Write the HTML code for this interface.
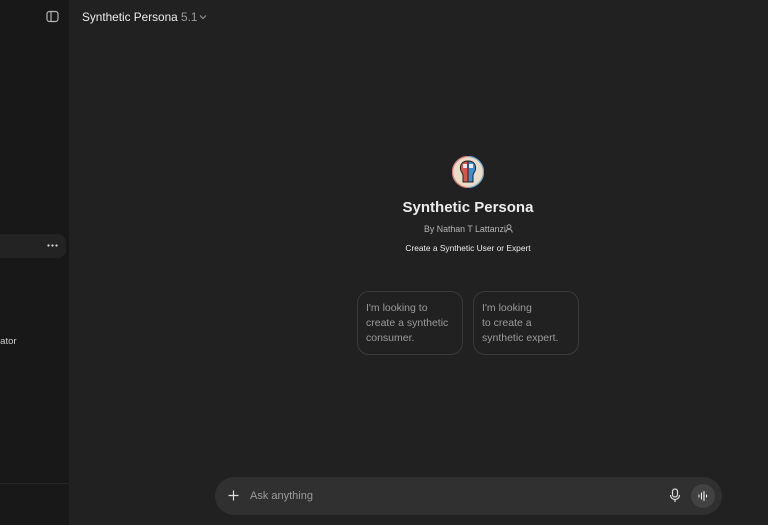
<!DOCTYPE html>
<html><head><meta charset="utf-8"><style>
*{margin:0;padding:0;box-sizing:border-box}
body{width:768px;height:525px;background:#212121;font-family:"Liberation Sans",sans-serif;position:relative;overflow:hidden;color:#ececec}
.side{position:absolute;left:0;top:0;width:69px;height:525px;background:#181818}
.t{position:absolute;white-space:nowrap}
.card{position:absolute;top:291px;width:106px;height:64px;border:1px solid #3a3a3a;border-radius:12px;font-size:10.5px;color:#9b9b9b;line-height:15px;padding:9px 8px}
</style></head><body>
<div class="side">
<svg style="position:absolute;left:46px;top:10px" width="13" height="13" viewBox="0 0 13 13"><rect x="1" y="1.5" width="11" height="10" rx="2.5" fill="none" stroke="#b4b4b4" stroke-width="1.2"/><line x1="5" y1="2" x2="5" y2="11" stroke="#b4b4b4" stroke-width="1.2"/></svg>
<div style="position:absolute;left:0;top:234px;width:66px;height:24px;background:#232323;border-radius:0 8px 8px 0"></div>
<svg style="position:absolute;left:47px;top:244px" width="11" height="3" viewBox="0 0 11 3"><circle cx="1.5" cy="1.5" r="1.1" fill="#ddd"/><circle cx="5.5" cy="1.5" r="1.1" fill="#ddd"/><circle cx="9.5" cy="1.5" r="1.1" fill="#ddd"/></svg>
<div class="t" style="left:-3px;top:336px;font-size:9.5px;color:#ccc">rator</div>
<div style="position:absolute;left:0;top:483px;width:69px;height:1px;background:#262626"></div>
</div>
<div class="t" style="left:82px;top:10px;font-size:11.8px;color:#ececec">Synthetic Persona <span style="color:#9b9b9b">5.1</span></div>
<svg style="position:absolute;left:199px;top:14px" width="8" height="6" viewBox="0 0 8 6"><path d="M1 1.5 L4 4.5 L7 1.5" fill="none" stroke="#9b9b9b" stroke-width="1.1"/></svg>
<svg style="position:absolute;left:452px;top:156px" width="32" height="32" viewBox="0 0 32 32">
<circle cx="16" cy="16" r="15.5" fill="#e9dcc8"/><path d="M16 0.5 A15.5 15.5 0 0 0 16 31.5" fill="none" stroke="#e07a70" stroke-width="1.3"/><path d="M16 0.5 A15.5 15.5 0 0 1 16 31.5" fill="none" stroke="#6aa8d4" stroke-width="1.3"/>
<path d="M16 5 C10 5 8 9 8.5 13 C9 16 10.5 17 11 19 L11 26 L16 26Z" fill="#d9534f" stroke="#222" stroke-width="1"/>
<path d="M16 5 C22 5 24 9 23.5 13 C23 16 21.5 17 21 19 L21 26 L16 26Z" fill="#3b8fd0" stroke="#222" stroke-width="1"/>
<rect x="11" y="8" width="4" height="4" fill="#eee"/><rect x="17" y="8" width="4" height="4" fill="#eee"/></svg>
<div class="t" style="left:368px;width:200px;text-align:center;top:199px;font-size:15px;font-weight:bold">Synthetic Persona</div>
<div class="t" style="left:424px;top:224px;font-size:8.8px;color:#b4b4b4">By Nathan T Lattanzi</div>
<svg style="position:absolute;left:505px;top:224px" width="8" height="9" viewBox="0 0 8 9"><circle cx="4" cy="2.8" r="2" fill="none" stroke="#b4b4b4" stroke-width="0.9"/><path d="M0.8 8.5 C1 6 2.5 5.3 4 5.3 C5.5 5.3 7 6 7.2 8.5" fill="none" stroke="#b4b4b4" stroke-width="0.9"/></svg>
<div class="t" style="left:368px;width:200px;text-align:center;top:243px;font-size:8.4px;color:#ececec">Create a Synthetic User or Expert</div>
<div class="card" style="left:357px">I'm looking to create a synthetic consumer.</div>
<div class="card" style="left:473px">I'm looking<br>to create a synthetic expert.</div>
<div style="position:absolute;left:215px;top:477px;width:507px;height:38px;background:#303030;border-radius:19px"></div>
<svg style="position:absolute;left:228px;top:490px" width="11" height="11" viewBox="0 0 11 11"><path d="M5.5 0.5v10M0.5 5.5h10" stroke="#ddd" stroke-width="1.2"/></svg>
<div class="t" style="left:250px;top:490px;font-size:11px;color:#9b9b9b">Ask anything</div>
<svg style="position:absolute;left:669px;top:488px" width="12" height="15" viewBox="0 0 12 15"><rect x="3.5" y="1" width="5" height="8" rx="2.5" fill="none" stroke="#ddd" stroke-width="1.2"/><path d="M1.5 7 A4.5 4.5 0 0 0 10.5 7 M6 11.5 V14" fill="none" stroke="#ddd" stroke-width="1.2"/></svg>
<div style="position:absolute;left:691px;top:484px;width:24px;height:24px;border-radius:12px;background:#424242"></div>
<svg style="position:absolute;left:697px;top:490px" width="12" height="12" viewBox="0 0 12 12"><path d="M2 5v2M4.5 3v6M7 1.5v9M9.5 5v2" stroke="#eee" stroke-width="1.1" stroke-linecap="round"/></svg>
</body></html>
